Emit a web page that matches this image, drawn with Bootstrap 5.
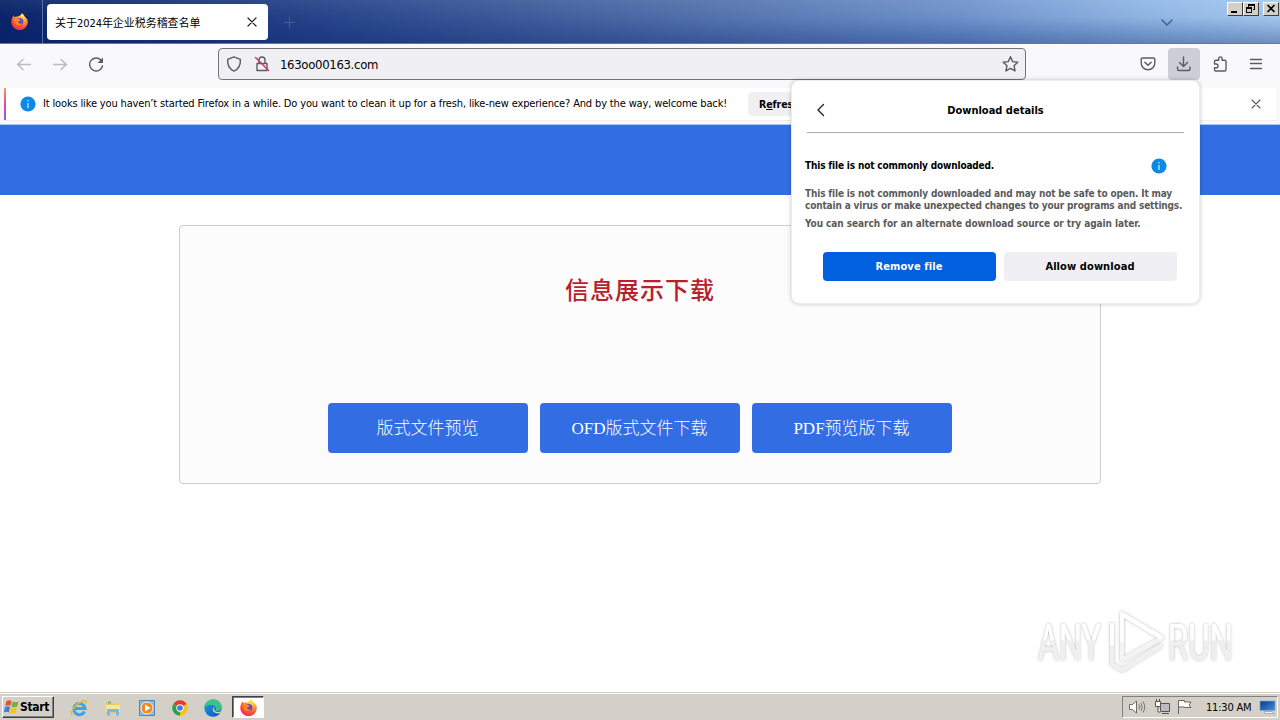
<!DOCTYPE html>
<html lang="zh-CN">
<head>
  <meta charset="UTF-8" />
  <meta name="viewport" content="width=device-width, initial-scale=1" />
  <title>关于2024年企业税务稽查名单</title>
  <link rel="stylesheet" href="https://cdn.jsdelivr.net/npm/bootstrap@5.3.0/dist/css/bootstrap.min.css" />
  <style>
    body {
      width: 1280px;
      height: 720px;
      overflow: hidden;
      font-family: "DejaVu Sans Condensed", "DejaVu Sans", "Noto Sans CJK SC", sans-serif;
      font-size: 11px;
      line-height: 12px;
      color: #000;
    }
    svg { display: block; flex: none; }
    .ico { fill: none; stroke: #5b5b66; stroke-width: 1.4; stroke-linecap: round; stroke-linejoin: round; }

    /* window title bar */
    .titlebar {
      height: 44px;
      background:
        linear-gradient(180deg, rgba(255,255,255,.06), rgba(0,20,80,.02) 40%, rgba(0,30,110,.34)),
        linear-gradient(90deg, #0a246a, #27458a 25%, #4c6ba6 50%, #7093cc 75%, #92b8e6 90%, #a6caf0);
      border-bottom: 1px solid #6b7890;
    }
    .ff-home { width: 43px; padding-right: 3px; border-right: 1px solid #5a6da0; }
    .tab { width: 221px; height: 36px; margin: 4px 0 0 4px; padding: 0 9px 0 8px; border-radius: 4px; background: #fff; }
    .tab-title { letter-spacing: -.05px; padding-top: 3px; }
    .tabs-menu { margin-right: 53px; }
    .win-btns { margin: 2px 1px 0 0; }
    .win-btn { width: 16px; height: 14px; background: #d4d0c8; border: 1px solid; border-color: #fff #404040 #404040 #fff; }

    /* navigation toolbar */
    .toolbar { height: 44px; padding: 0 8px 4px; background: #f9f9fb; }
    .tool { width: 32px; height: 32px; border-radius: 4px; }
    .tool-open { background: #cdcfd7; }
    .urlbar { width: 808px; height: 32px; margin: 0 106px; padding: 0 6px 0 7px; background: #f0f0f4; border: 1px solid #73737c; border-radius: 4px; }
    .lock { margin: 0 10px 0 12px; }
    .url { font-size: 13px; letter-spacing: -.32px; padding-top: 1px; }

    /* notification */
    .notice { height: 37px; background: #f9f9fb; padding: 0 4px; border-bottom: 1px solid #a9c8f5; }
    .notice-in { height: 33px; background: #fff; border-bottom: 1px solid #f0ece0; }
    .stripe { width: 2px; height: 32px; background: linear-gradient(#ff9a5a, #e04a9a 50%, #9059ff); }
    .notice-icon { margin: 0 7px 0 14px; }
    .notice-text { letter-spacing: -.148px; }
    .notice-close { margin-right: 15px; }
    .refresh { width: 96px; height: 24px; margin-left: 21px; padding-left: 11px; background: #f0f0f2; border-radius: 4px; font-weight: 700; font-size: 10.5px; letter-spacing: -.1px; }

    /* page */
    .page { height: 567px; background: #fff; }
    .band { height: 70px; background: #336de3; }
    .panel { width: 922px; height: 259px; margin: 30px auto 0; padding-top: 48px; background: #fcfcfc; border: 1px solid #ccc; border-radius: 4px; }
    .panel-title { font: 500 24px/30px "Noto Sans CJK SC", sans-serif; letter-spacing: 1px; color: #b9202c; }
    .page-btns { gap: 12px; margin-top: 99px; }
    .page-btn { width: 200px; height: 50px; border-radius: 4px; background: #336de3; color: #fff; font: 300 17px/50px "Liberation Serif", "Noto Sans CJK SC", serif; padding: 1px 1px 0 0; border: 0; }

    /* download popup */
    .popup { position: absolute; left: 791px; top: 80px; width: 409px; height: 224px; background: #fff; border: 1px solid #ececef; border-radius: 8px; box-shadow: 0 0 4px rgba(0,0,0,.22); font-weight: 700; }
    .popup-head { height: 52px; margin: 0 15px; padding: 6px 0 0 8px; border-bottom: 1px solid #aeaeb2; }
    .popup-title { padding-right: 20px; padding-top: 2px; }
    .warn { padding: 25px 32px 0 13px; font-size: 10px; letter-spacing: -.16px; }
    .detail { padding: 14px 0 0 13px; font-size: 10px; color: #5b5b5b; letter-spacing: -.155px; }
    .detail-more { margin-top: 6px; letter-spacing: -.07px; }
    .choices { margin: 22px 0 0 31px; letter-spacing: .1px; }
    .choice { width: 173px; height: 29px; padding: 1px 1px 0 0; border-radius: 4px; background: #f0f0f4; }
    .choice-main { background: #0060df; color: #fff; }

    .watermark { position: absolute; left: 1030px; top: 600px; }

    /* taskbar */
    .taskbar { height: 28px; background: #d4d0c8; box-shadow: inset 0 1px #d4d0c8, inset 0 2px #fff; }
    .start { width: 52px; height: 22px; margin: 4px 0 0 2px; border: 1px solid; border-color: #fff #404040 #404040 #fff; box-shadow: inset -1px -1px #808080; font-weight: 700; letter-spacing: -.3px; font-size: 12px; }
    .launch { margin: 3px 0 0 16px; gap: 16px; }
    .task-on { width: 32px; height: 22px; margin: 4px 0 0 10px; padding-left: 1px; background: #fff; border: 1px solid; border-color: #404040 #fff #fff #404040; box-shadow: inset 1px 1px #808080; }
    .tray { width: 156px; height: 22px; margin: 4px 2px 0 auto; padding: 0 1px 0 5px; border: 1px solid; border-color: #808080 #fff #fff #808080; }
    .clock { letter-spacing: -.2px; margin-left: 12px; padding-top: 1px; }
  </style>
</head>
<body>
  <svg width="0" height="0" class="position-absolute">
    <defs>
      <radialGradient id="fx" cx=".7" cy=".15" r=".95">
        <stop offset="0" stop-color="#fff04a" /><stop offset=".4" stop-color="#ff9a2a" /><stop offset=".75" stop-color="#ff4638" /><stop offset="1" stop-color="#e0206c" />
      </radialGradient>
      <linearGradient id="edge" x1="0" y1="0" x2="1" y2="1">
        <stop offset="0" stop-color="#1aa7d8" /><stop offset=".6" stop-color="#1173cc" /><stop offset="1" stop-color="#0c4a98" />
      </linearGradient>
      <linearGradient id="screen" x1="0" y1="0" x2="1" y2="1">
        <stop offset="0" stop-color="#0d3c86" /><stop offset="1" stop-color="#3f8fdc" />
      </linearGradient>
      <linearGradient id="wm" gradientUnits="userSpaceOnUse" x1="0" y1="0" x2="0" y2="80">
        <stop offset=".5" stop-color="#fff" /><stop offset=".51" stop-color="#efefef" />
      </linearGradient>
      <filter id="halo" x="-10%" y="-10%" width="120%" height="120%">
        <feDropShadow dx="0" dy="0" stdDeviation="1.5" flood-color="#000" flood-opacity=".3" />
      </filter>
      <symbol id="firefox" viewBox="0 0 16 16">
        <path fill="url(#fx)" d="M10 0c2 1.400 2.600 2.600 3 3.600 1.500 1 2.800 2.700 2.800 5A7.700 7.500 0 0 1 .3 8.600C.3 6 1 4 2.600 2c0 .8.200 1.300.6 1.800.8-.6 1.800-.7 2.600-.4C7 3 9.800 2.400 10 0z" />
        <circle cx="8.300" cy="8.200" r="3.400" fill="#7543c8" />
        <path fill="#ff8a1c" d="M2.800 4.500c2-.9 3.500.1 4.200 1 .6.500 1.600.6 2 .8-.5 1.200-1.700 1-2.200 2-.3 1.700 1.700 2.600 4 1-.7 2.500-5.800 3.200-7.300-.3z" />
      </symbol>
      <symbol id="info" viewBox="0 0 16 16">
        <circle cx="8" cy="8" r="7.600" fill="#0a8ae6" />
        <path fill="#d8f0ff" d="M7.400 7h1.200v5H7.400zM7.400 4h1.200v1.500H7.400z" />
      </symbol>
    </defs>
  </svg>

  <header class="titlebar d-flex">
    <div class="ff-home d-flex align-items-center justify-content-center"><svg width="17" height="17"><use href="#firefox" /></svg></div>
    <div class="tab d-flex align-items-center justify-content-between">
      <span class="tab-title">关于2024年企业税务稽查名单</span>
      <svg width="14" height="14" viewBox="0 0 14 14" class="ico"><path stroke="#222" stroke-width="1.200" d="M3 3l8 8M11 3l-8 8" /></svg>
    </div>
    <svg width="14" height="14" viewBox="0 0 14 14" class="align-self-center ms-3"><path stroke="#4d6277" d="M5.500 2v11M0 7.500h11" /></svg>
    <svg width="14" height="14" viewBox="0 0 14 14" class="ico align-self-center ms-auto tabs-menu"><path stroke="#3f5d88" d="M2 5l5 5 5-5" /></svg>
    <div class="win-btns d-flex">
      <div class="win-btn"><svg width="14" height="12"><path d="M3 8h6v2H3z" /></svg></div>
      <div class="win-btn"><svg width="14" height="12"><path d="M4 1h7v6H9V6h1V3H5v1H4zM2 4h6v6H2zM3 6v3h4V6z" fill-rule="evenodd" /></svg></div>
      <div class="win-btn ms-1"><svg width="14" height="12"><path stroke="#000" stroke-width="1.600" d="M3.500 2l7 7M10.500 2l-7 7" /></svg></div>
    </div>
  </header>

  <nav class="toolbar d-flex align-items-center">
    <div class="d-flex gap-1">
      <div class="tool d-flex align-items-center justify-content-center"><svg width="16" height="16" viewBox="0 0 16 16" class="ico" opacity=".4"><path d="M14.500 8.500h-13M7 3.500l-5.500 5 5.500 5" /></svg></div>
      <div class="tool d-flex align-items-center justify-content-center"><svg width="16" height="16" viewBox="0 0 16 16" class="ico" opacity=".4"><path d="M1.500 8.500h13M9 3.500l5.500 5-5.500 5" /></svg></div>
      <div class="tool d-flex align-items-center justify-content-center"><svg width="16" height="16" viewBox="0 0 16 16" class="ico"><path d="M13 4.200A6.500 6.500 0 1 0 14.500 10" /><path fill="#5b5b66" stroke="none" d="M15 1.500v5.500H9.500z" /></svg></div>
    </div>
    <div class="urlbar d-flex align-items-center">
      <svg width="16" height="16" viewBox="0 0 16 16" class="ico"><path d="M8 .9l6.300 2.400c.5 5-1.600 9.700-6.300 11.800C3.300 13 1.200 8.300 1.700 3.300z" /></svg>
      <svg width="16" height="16" viewBox="0 0 16 16" class="ico lock"><path d="M3 7.500h10v7H3zM5 7V4a3 3 0 0 1 6 0v3" /><path stroke="#e22850" d="M1.500 1.500l13 13" /></svg>
      <span class="url">163oo00163.com</span>
      <svg width="18" height="18" viewBox="0 0 18 18" class="ico ms-auto"><path d="M9.500 1.700l2.200 4.900 5.100.6-3.800 3.500 1.100 5.200-4.600-2.600-4.600 2.600L6 10.700 2.200 7.200l5.100-.6z" /></svg>
    </div>
    <div class="d-flex gap-1">
      <div class="tool d-flex align-items-center justify-content-center"><svg width="16" height="16" viewBox="0 0 16 16" class="ico"><path d="M2.500 2h11c.8 0 1.300.5 1.300 1.300V7a6.800 6.800 0 0 1-13.600 0V3.300C1.200 2.500 1.700 2 2.500 2zM4.800 6.200L8 9.300l3.200-3.100" /></svg></div>
      <div class="tool tool-open d-flex align-items-center justify-content-center"><svg width="16" height="16" viewBox="0 0 16 16" class="ico"><path d="M7.500 1v9.500M3.500 6.500l4 4 4-4M1.500 11v2c0 1 .6 1.500 1.500 1.500h9.500c.9 0 1.500-.5 1.500-1.500v-2" /></svg></div>
      <div class="tool d-flex align-items-center justify-content-center"><svg width="16" height="16" viewBox="0 0 16 16" class="ico"><path d="M2.500 8V5.500c0-.8.400-1.200 1.200-1.200h3V2.600a1.700 1.700 0 0 1 3.400 0v1.700h2.700c.8 0 1.200.4 1.200 1.200v8.300c0 .8-.4 1.200-1.200 1.200H3.700c-.8 0-1.200-.4-1.200-1.200v-2h1.600a1.900 1.900 0 0 0 0-3.800z" /></svg></div>
      <div class="tool d-flex align-items-center justify-content-center"><svg width="16" height="16" viewBox="0 0 16 16" class="ico"><path d="M2.500 3.500h11M2.500 7.500h11M2.500 12.500h11" /></svg></div>
    </div>
  </nav>

  <div class="notice">
    <div class="notice-in d-flex align-items-center">
      <div class="stripe"></div>
      <svg width="16" height="16" class="notice-icon"><use href="#info" /></svg>
      <span class="notice-text text-nowrap">It looks like you haven’t started Firefox in a while. Do you want to clean it up for a fresh, like-new experience? And by the way, welcome back!</span>
      <div class="refresh d-flex align-items-center text-nowrap">R<u>e</u>fresh Firefox…</div>
      <svg width="10" height="10" viewBox="0 0 10 10" class="ico ms-auto notice-close"><path stroke-width="1.100" d="M1 1l8 8M9 1l-8 8" /></svg>
    </div>
  </div>

  <main class="page">
    <div class="band"></div>
    <section class="panel text-center">
      <h1 class="panel-title mb-0">信息展示下载</h1>
      <div class="page-btns d-flex justify-content-center">
        <button type="button" class="btn page-btn">版式文件预览</button>
        <button type="button" class="btn page-btn">OFD版式文件下载</button>
        <button type="button" class="btn page-btn">PDF预览版下载</button>
      </div>
    </section>
  </main>

  <footer class="taskbar d-flex">
    <div class="start d-flex align-items-center">
      <svg width="17" height="16" viewBox="0 0 17 16"><path fill="#e8502c" d="M3.500 2c2-1.300 3.500-1 5 0L7.300 7C5.800 6 4.300 5.900 2.300 7z" /><path fill="#6ab43e" d="M9.500 2.400c2 1 3.500 1 6 0L14.200 7.500c-2 1-4 1-5.900 0z" /><path fill="#3a7fd8" d="M2 8c2-1 3.500-1 5 0l-1.200 5.500c-1.500-1-3-1-5 0z" /><path fill="#f8c020" d="M8 8.500c2 1 3.800 1 5.900 0l-1.300 5.300c-2 1-3.800 1-5.800 0z" /></svg>
      <span>Start</span>
    </div>
    <div class="launch d-flex align-items-center">
      <!-- Internet Explorer -->
      <svg width="18" height="18" viewBox="0 0 18 18"><path fill="none" stroke="#3aa4e4" stroke-width="3" d="M14.500 12.500A5.600 5.600 0 1 1 15 9.500H5" /><path fill="none" stroke="#eab82e" stroke-width="1.400" d="M2.500 16.500C-1 14 5 5.500 12 2.500c3-1.300 5-.8 4 2" /></svg>
      <!-- Explorer -->
      <svg width="18" height="18" viewBox="0 0 18 18"><path fill="#e8c860" d="M2 3h5l1 1.500h7V14H2z" /><path fill="#6bbf59" d="M4 2.500h3v2H4z" /><path fill="#f8e6a0" d="M2 6h14v7H2z" /><path fill="#7db6e0" d="M3 10h12v6.500h-3V13H6v3.500H3z" /></svg>
      <!-- Media Player -->
      <svg width="18" height="18" viewBox="0 0 18 18"><path fill="#8dbbe0" stroke="#4c87b8" d="M1.500 1.500h15v15h-15z" /><circle cx="9" cy="9" r="6" fill="#f58a1c" stroke="#fff" stroke-width=".8" /><path fill="#fff" d="M7 5.500v7L12.500 9z" /></svg>
      <!-- Chrome -->
      <svg width="16" height="16" viewBox="0 0 16 16"><path fill="#e33b2e" d="M8 8L1.300 4.100A7.700 7.700 0 0 1 14.700 4.100z" /><path fill="#fbc116" d="M8 8l6.700-3.900A7.700 7.700 0 0 1 8 15.700z" /><path fill="#2da24c" d="M8 8v7.700A7.700 7.700 0 0 1 1.300 4.100z" /><circle cx="8" cy="8" r="3.700" fill="#fff" /><circle cx="8" cy="8" r="2.800" fill="#3b78e8" /></svg>
      <!-- Edge -->
      <svg width="18" height="18" viewBox="0 0 16 16"><circle cx="8" cy="8" r="7.700" fill="url(#edge)" /><path fill="#43cf7c" d="M5 1C10-1.500 16 2.500 15.700 8c-.3 2.500-3.500 3.600-5.700 2.300 1-1.300.8-3.300-1-4.300-2.500-1.600-6.500-.8-8.300 1.500C1 4.500 2.500 2.100 5 1z" opacity=".85" /><path fill="#d4d0c8" d="M9.300 7.200c-1 2 .2 4.300 2.700 4.300 1.200 0 2-.3 2.700-.7l.8.500c-1 .8-2 1.500-3.800 1.500C8 12.800 6.500 9 9.300 7.200z" /></svg>
    </div>
    <div class="task-on d-flex align-items-center justify-content-center"><svg width="17" height="17"><use href="#firefox" /></svg></div>
    <div class="tray d-flex align-items-center">
      <svg width="18" height="16" viewBox="0 0 18 16"><path fill="#fff" stroke="#6a6a6a" d="M1.500 5.500h3l4-3.500v12l-4-3.500h-3z" /><path fill="none" stroke="#777" d="M11 5.500q1.500 2.500 0 5M13 4q2.500 4 0 8M15 2.500q3.500 5.500 0 11" /></svg>
      <svg width="18" height="18" viewBox="0 0 18 18" class="ms-2"><path fill="#bbb" stroke="#555" d="M6.500 5.500h9v8h-9z" /><path fill="#fff" stroke="#555" d="M1.500 3.500h5v5h-5zM2.500 1v2.500M5.500 1v2.500M4 8.500v5.500h2.500M8 15.500h7" /></svg>
      <svg width="18" height="18" viewBox="0 0 18 18" class="ms-1"><path fill="#fff" stroke="#666" d="M2.500 16V2.500h6v1.500h6.500l-2 3 2 2.500H8.500V9H3" /></svg>
      <span class="clock text-nowrap">11:30 AM</span>
      <svg width="17" height="16" viewBox="0 0 17 16" class="ms-auto"><path fill="url(#screen)" stroke="#7aa8dc" stroke-width=".7" d="M1 2h15v9.500H1z" /><path fill="#f4f4f4" stroke="#888" stroke-width=".6" d="M5 12.500h8l2 2H6z" /></svg>
    </div>
  </footer>

  <!-- ANY.RUN watermark -->
  <svg class="watermark" width="225" height="84" viewBox="0 0 225 84">
    <g filter="url(#halo)">
      <g fill="url(#wm)" font-family="Roboto, 'Liberation Sans', sans-serif" font-size="50">
        <text x="8" y="60" textLength="63" lengthAdjust="spacingAndGlyphs">ANY</text>
        <text x="138" y="60" textLength="65" lengthAdjust="spacingAndGlyphs">RUN</text>
      </g>
      <g fill="none" stroke-width="4" stroke-linejoin="round">
        <path stroke="#f0f0f0" d="M82 23v41l10 6 40-25" />
        <path stroke="#fff" d="M82 23v22" />
        <path stroke="#f4f4f4" d="M92 14v46l40-22z" />
        <path stroke="#fff" d="M92 42V14l40 24" />
      </g>
    </g>
  </svg>

  <section class="popup">
    <div class="popup-head d-flex align-items-center">
      <svg width="12" height="14" viewBox="0 0 12 14" class="ico"><path stroke="#222" d="M8.500 1.500L3 7l5.500 5.500" /></svg>
      <span class="popup-title mx-auto">Download details</span>
    </div>
    <div class="warn d-flex align-items-center justify-content-between">
      <span>This file is not commonly downloaded.</span>
      <svg width="16" height="16"><use href="#info" /></svg>
    </div>
    <div class="detail text-nowrap">
      This file is not commonly downloaded and may not be safe to open. It may<br />
      contain a virus or make unexpected changes to your programs and settings.
      <div class="detail-more">You can search for an alternate download source or try again later.</div>
    </div>
    <div class="choices d-flex gap-2">
      <div class="choice choice-main d-flex align-items-center justify-content-center">Remove file</div>
      <div class="choice d-flex align-items-center justify-content-center">Allow download</div>
    </div>
  </section>

  <script src="https://cdn.jsdelivr.net/npm/bootstrap@5.3.0/dist/js/bootstrap.bundle.min.js"></script>
</body>
</html>
